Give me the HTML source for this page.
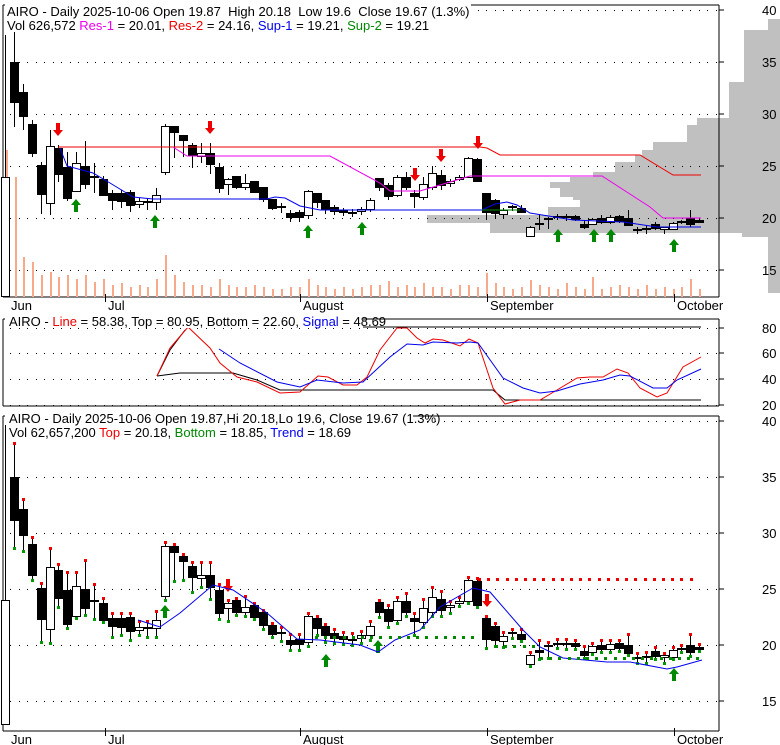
<!DOCTYPE html>
<html><head><meta charset="utf-8"><style>
html,body{margin:0;padding:0;background:#fff;}
svg{display:block;font-family:"Liberation Sans",Arial,sans-serif;}
</style></head><body>
<svg id="s" width="780" height="745" viewBox="0 0 780 745" xmlns="http://www.w3.org/2000/svg"></svg>
<script>
var S=document.getElementById('s');var h='';
function L(x1,y1,x2,y2,c,w,d){h+='<line x1="'+x1+'" y1="'+y1+'" x2="'+x2+'" y2="'+y2+'" stroke="'+c+'" stroke-width="'+(w||1)+'"'+(d?' stroke-dasharray="'+d+'"':'')+' shape-rendering="crispEdges"/>';}
function R(x,y,w,hh,f,st){h+='<rect x="'+x+'" y="'+y+'" width="'+w+'" height="'+hh+'" fill="'+f+'"'+(st?' stroke="'+st+'" stroke-width="1"':'')+' shape-rendering="crispEdges"/>';}
function P(pts,c,w){h+='<polyline fill="none" stroke="'+c+'" stroke-width="'+(w||1)+'" points="'+pts+'"/>';}
function T(x,y,t,s,a){h+='<text x="'+x+'" y="'+y+'" font-size="'+(s||13)+'"'+(a?' text-anchor="'+a+'"':'')+'>'+t+'</text>';}
function grid(y){for(var x=10;x<716;x+=8.5)R(Math.round(x),y,1,1,'#000');}
var prof=[[19,30,768],[30,82,744],[82,118,729],[118,125,697],[125,142,687],[142,150,653],[150,155,642],[155,162,635],[162,172,615],[172,177,593],[177,182,570],[182,188,550],[188,197,560],[197,200,573],[200,207,580],[207,215,548],[215,223,427],[223,233,490],[233,237,742],[237,293,768]];
prof.forEach(function(p){R(p[2],p[0],780-p[2],p[1]-p[0],'#c0c0c0');});
[10,62,114,166,218,270].forEach(grid);
[328,353,379,405].forEach(grid);
[421,477,533,589,645,701].forEach(grid);
function frame(y1,y2){L(3,y1,719,y1,'#000');L(3,y1,3,y2,'#000');L(719,y1,719,y2,'#000');L(3,y2,719,y2,'#000');}
frame(5,297);frame(319,406);frame(416,731);
[10,62,114,166,218,270,328,353,379,405,421,477,533,589,645,701].forEach(function(y){L(719,y,724,y,'#000');});
var vol=[147,120,40,35,22,25,20,22,18,22,15,18,12,14,10,12,10,18,42,22,15,12,12,10,18,12,10,10,12,10,8,8,10,10,18,12,10,8,10,8,10,12,12,16,10,12,10,14,10,10,8,12,12,10,24,14,10,8,10,17,12,10,8,14,10,8,20,8,10,12,10,8,12,8,10,8,10,18,8];
function cx(i){return 5+i*8.9;}
vol.forEach(function(v,i){R(Math.round(cx(i))+ (i<2?1:0),297-v,2,v,'#f7a98a');});
var C=[[177,297,35,297,1],[62,103,32,127,0],[92,117,84,130,0],[124,154,120,157,0],[165,195,162,214,0],[146,204,130,215,1],[148,175,145,182,0],[167,199,152,201,0],[163,192,152,192,1],[166,185,141,189,0],[176,178,163,193,0],[179,196,176,196,0],[193,201,190,210,0],[193,202,190,208,0],[192,206,190,212,0],[201,205,198,208,1],[201,203,198,210,0],[195,203,188,210,1],[126,173,124,175,1],[126,133,126,158,0],[135,141,135,157,0],[145,156,143,168,0],[153,157,143,163,1],[153,165,143,174,0],[167,189,163,193,0],[179,185,178,195,1],[176,188,176,189,0],[183,188,174,190,1],[181,193,181,193,0],[187,200,187,202,0],[199,209,199,210,0],[206,208,203,213,0],[213,218,210,222,0],[212,218,210,222,0],[191,216,190,218,1],[193,203,193,208,0],[200,210,200,214,0],[207,212,205,215,0],[210,213,208,216,0],[212,214,209,217,0],[209,212,207,215,1],[200,210,198,212,1],[178,188,178,191,0],[185,197,183,200,0],[177,196,175,197,1],[177,188,172,190,0],[193,197,190,208,0],[184,198,177,200,1],[173,188,166,190,1],[175,186,170,190,0],[181,184,179,187,1],[177,180,175,181,1],[158,178,157,178,1],[159,182,158,182,0],[193,213,193,220,0],[200,214,199,218,0],[210,215,208,219,1],[206,208,205,211,0],[208,213,205,213,0],[227,237,226,237,1],[223,225,215,230,0],[218,220,217,229,0],[216,218,214,220,0],[216,218,214,221,1],[216,220,215,221,0],[224,228,221,229,0],[219,225,218,225,1],[218,223,215,224,0],[217,223,215,224,1],[216,222,215,223,0],[218,226,210,226,0],[229,231,227,234,0],[228,230,226,234,0],[224,229,222,230,0],[227,230,227,234,1],[223,230,222,230,1],[221,223,220,224,1],[218,225,210,227,0],[220,223,219,223,0]];
function m3(y){return 645+(y-218)*11.2/10.4;}
function candle(i,c,f,dots){var x=Math.round(cx(i));var t=f(c[0]),b=f(c[1]),wt=f(c[2]),wb=f(c[3]);
 L(x+0.5,wt,x+0.5,wb,'#000');
 if(b-t<2){L(x-4,t+0.5,x+5,t+0.5,'#000',2);}
 else if(c[4])R(x-4+0.5,t+0.5,8,b-t-1,'#fff','#000');else R(x-4,t,9,b-t,'#000');
 if(dots){R(x-1,wt-3,3,3,'#e00');R(x-1,wb,3,3,'#090');}}
C.forEach(function(c,i){candle(i,c,function(y){return Math.round(y);},false);});
C.forEach(function(c,i){if(i==0){var x=Math.round(cx(0));L(x+0.5,421,x+0.5,725,'#000');R(x-4+0.5,600.5,8,124,'#fff','#000');return;}candle(i,c,function(y){return Math.round(m3(y));},true);});
P('58,147 480,147 487,148 500,155 640,155 673,175 701,175','#e00');
P('173,147 187,156 330,156 380,183 390,191 420,191 470,176 602,176 650,207 663,218 701,218','#e0e');
P('60,148 67,166 93,173 110,183 133,197 153,199 267,199 275,197 285,198 300,206 320,210 482,210 495,204 507,202 517,205 530,213 573,220 623,222 657,227 701,227','#00e');
P('482,210 520,210','#080');
function arrow(x,y,up,c){if(up)h+='<path d="M'+x+' '+y+' l-5 6 h3 v7 h4 v-7 h3 z" fill="'+c+'"/>';else h+='<path d="M'+x+' '+y+' l-5 -6 h3 v-7 h4 v7 h3 z" fill="'+c+'"/>';}
[[76,199],[155,215],[308,225],[362,222],[558,229],[594,229],[611,229],[674,239]].forEach(function(a){arrow(a[0],a[1],1,'#080');});
[[58,136],[210,134],[415,181],[441,162],[478,149]].forEach(function(a){arrow(a[0],a[1],0,'#e00');});
[[165,605],[326,654],[378,640],[674,668]].forEach(function(a){arrow(a[0],a[1],1,'#080');});
[[228,592],[487,607]].forEach(function(a){arrow(a[0],a[1],0,'#e00');});
P('138,620 160,627 180,613 213,585 233,590 267,613 297,639 320,640 360,645 378,652 395,640 420,630 440,607 473,588 490,592 523,630 540,647 563,658 607,662 630,662 667,669 677,667 702,660','#00e');
for(var x=478;x<=693;x+=9.2)R(Math.round(x),578,3,3,'#e00');
for(var x=315;x<=480;x+=9.2)R(Math.round(x),636,3,3,'#080');
for(var x=495;x<=533;x+=9.2)R(Math.round(x),645,3,3,'#080');
for(var x=540;x<=702;x+=9.2)R(Math.round(x),657,3,3,'#080');
P('362,327 701,327','#000');
P('157,376 180,373 233,373 257,380 280,390 493,390 505,400 701,400','#000');
P('157,376 170,350 185,330','#000');
P('157,376 170,348 188,327 210,348 220,363 237,377 257,382 280,393 300,392 318,376 328,377 343,385 357,385 367,377 380,350 390,337 397,328 407,328 417,338 425,343 433,339 443,340 460,346 469,339 478,343 487,370 493,388 505,404 520,400 540,400 557,390 577,378 590,377 603,377 617,369 628,373 640,388 657,397 667,393 683,367 701,357','#e00');
P('219,349 240,363 277,382 300,387 317,380 343,383 363,382 390,357 407,344 423,345 433,342 457,343 470,342 478,343 503,378 523,388 540,393 557,391 580,384 603,380 620,375 630,376 653,388 667,388 677,380 701,369','#00e');
[['40',10],['35',62],['30',114],['25',166],['20',218],['15',270],['80',328],['60',353],['40',379],['20',405],['40',421],['35',477],['30',533],['25',589],['20',645],['15',701]].forEach(function(l){T(762,l[1]+5,l[0],13);});
function months(y){[[8,'Jun',0],[105,'Jul',1],[300,'August',1],[487,'September',1],[674,'October',1]].forEach(function(m){if(m[2])L(m[0]+0.5,y-3,m[0]+0.5,y+5,'#000');T(m[0]+3,y+13,m[1],13);});}
months(297);months(731);
function tb(x,y,w){R(x,y,w,14,'#fff');}
tb(5,0,466);
T(7,16,'AIRO - Daily 2025-10-06 Open 19.87&#160; High 20.18&#160; Low 19.6&#160; Close 19.67 (1.3%)');
T(7,30,'Vol 626,572 <tspan fill="#e0e">Res-1</tspan> = 20.01, <tspan fill="#e00">Res-2</tspan> = 24.16, <tspan fill="#00e">Sup-1</tspan> = 19.21, <tspan fill="#080">Sup-2</tspan> = 19.21');
tb(5,314,358);
T(9,326,'AIRO - <tspan fill="#e00">Line</tspan> = 58.38, Top = 80.95, Bottom = 22.60, <tspan fill="#00e">Signal</tspan> = 48.69');
tb(5,411,408);
T(9,423,'AIRO - Daily 2025-10-06 Open 19.87,Hi 20.18,Lo 19.6, Close 19.67 (1.3%)');
T(9,437,'Vol 62,657,200 <tspan fill="#e00">Top</tspan> = 20.18, <tspan fill="#080">Bottom</tspan> = 18.85, <tspan fill="#00e">Trend</tspan> = 18.69');
S.innerHTML=h;
</script>
</body></html>
